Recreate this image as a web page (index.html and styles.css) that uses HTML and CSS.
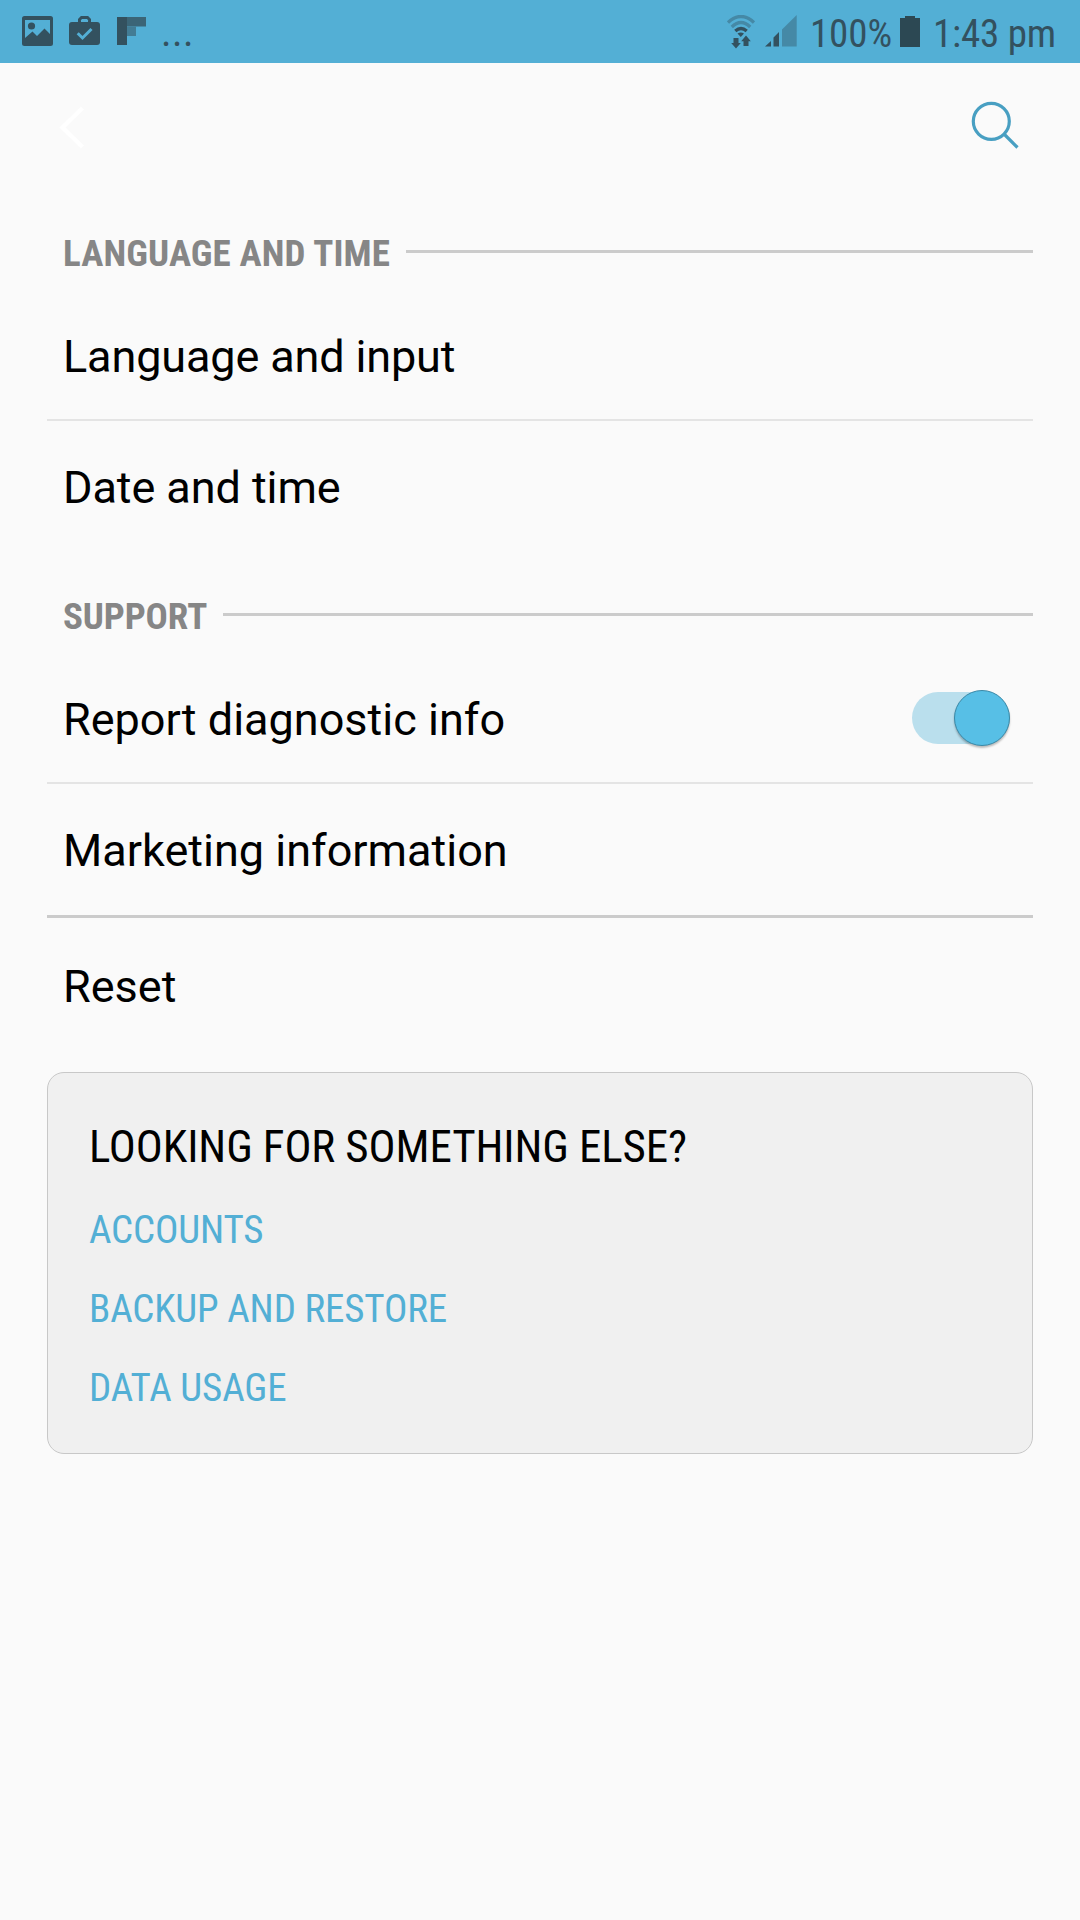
FILE: index.html
```html
<!DOCTYPE html>
<html lang="en">
<head>
<meta charset="utf-8">
<title>General management</title>
<link rel="stylesheet" href="styles.css">
</head>
<body>
<header class="status">
  <div class="status-left">
    <svg class="icon-picture" width="31" height="30" viewBox="0 0 31 30"><path fill="#33515f" fill-rule="evenodd" d="M2.500 0H28.500Q31 0 31 2.500V27.500Q31 30 28.500 30H2.500Q0 30 0 27.500V2.500Q0 0 2.500 0ZM3 4V22L10.500 15.500L15 20L22.500 12.500L28 18V4Z"/><circle cx="9.500" cy="10" r="3.600" fill="#33515f"/></svg>
    <svg class="icon-bag" width="31" height="29" viewBox="0 0 31 29"><path fill="none" stroke="#33515f" stroke-width="3" d="M10.500 8V3.500L12.500 1.500H18.500L20.500 3.500V8"/><rect y="6" width="31" height="23" rx="3" fill="#33515f"/><path fill="none" stroke="#53afd5" stroke-width="3" d="M8.700 17.300L13.500 22L22.500 13"/></svg>
    <svg class="icon-flip" width="29" height="28" viewBox="0 0 29 28"><path fill="#33515f" d="M0 0H10V28H0Z"/><path fill="#3b6577" d="M10 0H29V9.500H10Z"/><path fill="#437c94" d="M10 9.500H19V19H10Z"/></svg>
    <span class="more">...</span>
  </div>
  <div class="status-right">
    <svg class="icon-wifi" width="28" height="34" viewBox="0 0 28 34"><g fill="none" stroke-width="3.300"><path stroke="#4589a6" d="M1 7.500Q14 -4.500 27 7.500M4.800 12Q14 3.200 23.200 12"/><path stroke="#33515f" d="M8.300 16Q14 10.800 19.700 16"/></g><path fill="#33515f" d="M10.500 18.500Q13.800 16.500 17 18.500L13.800 22ZM6.500 23H11.500V28H13.800L9 33.500L4.200 28H6.500ZM16.500 31V26.200H14.200L19 20.500L23.800 26.200H21.500V31Z"/></svg>
    <svg class="icon-signal" width="32" height="32" viewBox="0 0 32 32"><path fill="#33515f" d="M0 31.500L6 26V31.500ZM8.500 31.500V22.500L14 17V31.500Z"/><path fill="#4589a6" d="M17 31.500V14.500L31.700 0V31.500Z"/></svg>
    <span class="cond battery-text">100%</span>
    <svg class="icon-battery" width="20" height="31" viewBox="0 0 20 31"><path fill="#2c4853" d="M0 2H5V0H15V2H20V31H0Z"/></svg>
    <span class="cond clock">1:43 pm</span>
  </div>
</header>
<nav class="appbar">
  <svg width="28" height="44" viewBox="0 0 28 44"><path fill="none" stroke="#fff" stroke-width="4.500" d="M25.500 2L5.500 21.500L25.500 41"/></svg>
  <svg width="48" height="48" viewBox="0 0 48 48"><g fill="none" stroke="#489fc2" stroke-width="3.200"><circle cx="20.300" cy="20.300" r="18"/><path d="M33 33L46.500 46.500"/></g></svg>
</nav>
<main class="settings">
  <h2 class="section"><span class="cond section-title wide">LANGUAGE AND TIME</span></h2>
  <div class="row divided tight">Language and input</div>
  <div class="row last">Date and time</div>
  <h2 class="section"><span class="cond section-title tight">SUPPORT</span></h2>
  <div class="row divided">Report diagnostic info<span class="switch"><span class="thumb"></span></span></div>
  <div class="row thick">Marketing information</div>
  <div class="row reset">Reset</div>
  <section class="card">
    <h3 class="cond card-title">LOOKING FOR SOMETHING ELSE?</h3>
    <a class="cond link">ACCOUNTS</a>
    <a class="cond link">BACKUP AND RESTORE</a>
    <a class="cond link">DATA USAGE</a>
  </section>
</main>
</body>
</html>
```
FILE: styles.css
```css
* { box-sizing: border-box; }
body {
  margin: 0;
  min-height: 1920px;
  background: #fafafa;
  color: #000;
  font-family: Roboto, sans-serif;
}
svg { display: block; flex: none; }
.cond {
  font-family: "Roboto Condensed", Roboto, sans-serif;
  font-stretch: 75%;
  white-space: nowrap;
}
.tight { letter-spacing: -.14px; }
.wide { letter-spacing: .14px; }
.status {
  display: flex;
  justify-content: space-between;
  height: 63px;
  padding: 0 24px 0 22px;
  background: #53afd5;
  color: #33515f;
  font-size: 39px;
  line-height: 67px;
}
.status-left, .status-right { display: flex; align-items: flex-start; }
.icon-picture { margin-top: 16px; }
.icon-bag { margin: 16px 0 0 16px; }
.icon-flip { margin: 17px 0 0 17px; }
.more { margin-left: 15px; font-size: 40px; line-height: 65px; letter-spacing: .4px; }
.icon-wifi { margin-top: 15px; }
.icon-signal { margin: 15px 13px 0 10px; }
.icon-battery { margin: 16px 13px 0 8px; }
.battery-text { letter-spacing: -.1px; line-height: 68px; }
.clock { letter-spacing: -.2px; line-height: 68px; }
.appbar {
  display: flex;
  justify-content: space-between;
  align-items: flex-start;
  height: 147px;
  padding: 38px 61px 0 57px;
}
.appbar svg:first-child { margin-top: 5px; }
.settings { padding: 0 47px; }
.section {
  display: flex;
  align-items: center;
  gap: 16px;
  height: 84px;
  margin: 0;
  padding: 0 0 1px 16px;
}
.section::after { content: ""; flex: 1; height: 3px; background: #cbcbcb; }
.section-title {
  padding-top: 3px;
  color: #868686;
  font-size: 37px;
  font-weight: 700;
}
.row {
  display: flex;
  justify-content: space-between;
  padding: 0 23px 0 16px;
  font-size: 45px;
  line-height: 125px;
}
.divided { border-bottom: 2px solid #e4e4e4; }
.last { height: 152px; line-height: 133px; letter-spacing: -.08px; }
.thick { height: 134px; line-height: 133px; border-bottom: 3px solid #cbcbcb; }
.reset { height: 154px; line-height: 137px; }
.switch {
  display: flex;
  justify-content: flex-end;
  align-items: center;
  align-self: center;
  width: 98px;
  height: 52px;
  margin-top: -3px;
  border-radius: 26px;
  background: #badfed;
}
.thumb {
  flex: none;
  width: 56px;
  height: 56px;
  border: 1px solid #3b89a7;
  border-radius: 50%;
  background: #57bfe6;
  box-shadow: 0 2px 2px rgba(0, 0, 0, .25);
}
.card {
  display: flex;
  flex-direction: column;
  height: 382px;
  padding: 33px 41px;
  border: 1px solid #c8c8c8;
  border-radius: 17px;
  background: #f0f0f0;
}
.card-title {
  margin: 0 0 3px;
  font-size: 45px;
  font-weight: 400;
  line-height: 82px;
  letter-spacing: -.1px;
}
.link {
  color: #53afd5;
  font-size: 39px;
  line-height: 79px;
  letter-spacing: -.16px;
}
```
